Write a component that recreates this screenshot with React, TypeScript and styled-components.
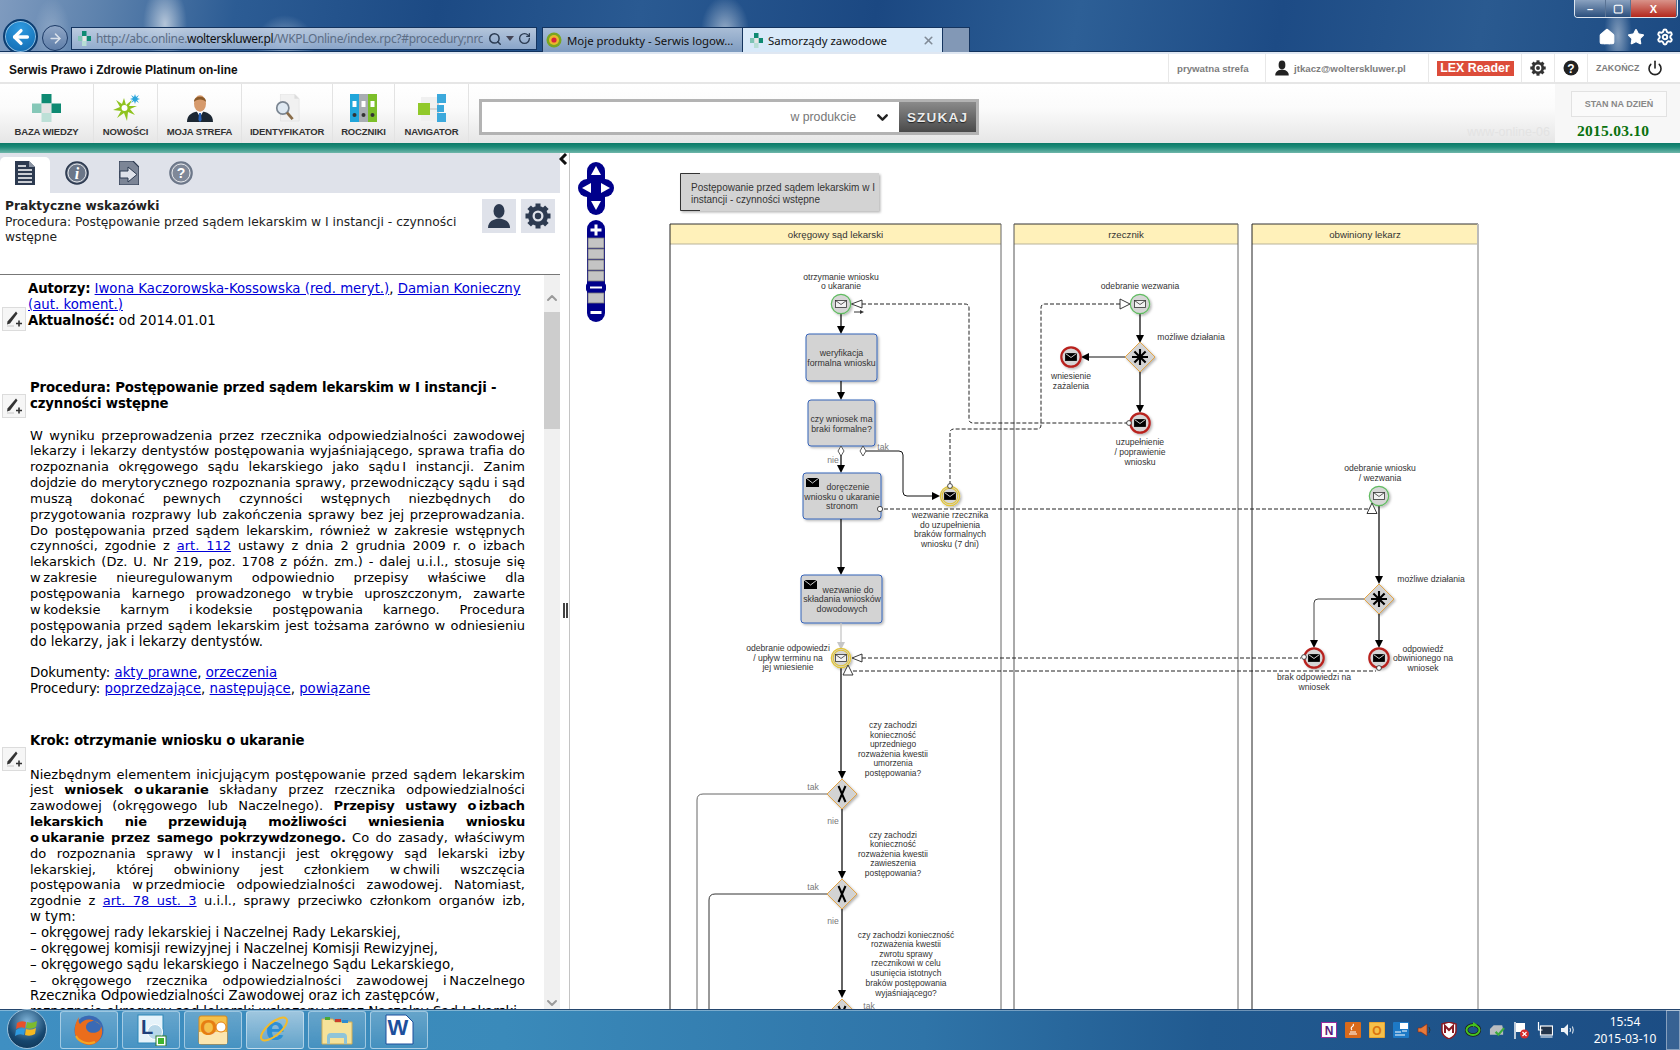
import React from "react";
import styled, { createGlobalStyle } from "styled-components";
import { ArrowLeft, ArrowRight, Search, RotateCw, Home, Star, Settings, Power, ChevronDown, ChevronUp, X as XIcon } from "lucide-react";

const Global = createGlobalStyle`
  html, body { margin: 0; padding: 0; background: #fff; }
  * { box-sizing: border-box; }
`;

const Page = styled.div`
  width: 1680px; height: 1050px; display: flex; flex-direction: column; overflow: hidden;
  font-family: "Liberation Sans", Arial, sans-serif; position: relative;
`;

/* ------- browser chrome ------- */
const Chrome = styled.div`
  height: 54px; position: relative; display: flex; align-items: flex-start; padding: 27px 0 0 3px; overflow: hidden;
  border-bottom: 2px solid #dfe7f2; box-shadow: inset 0 -1px 0 #10325e;
  background:
    radial-gradient(ellipse 18px 34px at 52px 32px, rgba(255,255,255,.22), transparent),
    radial-gradient(ellipse 22px 40px at 165px 24px, rgba(255,255,255,.6), transparent),
    radial-gradient(ellipse 30px 30px at 285px 45px, rgba(255,255,255,.45), transparent),
    radial-gradient(ellipse 24px 34px at 725px 30px, rgba(255,255,255,.5), transparent),
    radial-gradient(ellipse 14px 40px at 1618px 36px, rgba(255,255,255,.45), transparent),
    linear-gradient(100deg, #7f9bbf 0, #5d82ad 6%, #2c5c94 14%, #1c4a84 26%, #2a5a92 38%, #1b4882 52%, #2d5f96 64%, #1d4b85 76%, #2a5a90 88%, #1c4a82 100%);
`;
const BackBtn = styled.div`
  width: 35px; height: 35px; margin-top: -8px; border-radius: 50%; background: radial-gradient(circle at 50% 25%, #2f9ae0, #0d66ad);
  border: 2px solid #0d3d70; box-shadow: 0 0 0 1px rgba(255,255,255,.5) inset; display: flex; align-items: center; justify-content: center; color: #fff; flex: none;
`;
const ForwardBtn = styled.div`
  width: 26px; height: 26px; margin: -2px 0 0 4px; border-radius: 50%; background: linear-gradient(#8fa6c6, #5f7ea8);
  border: 1px solid #1c3a66; display: flex; align-items: center; justify-content: center; color: #d8e0ea; flex: none;
`;
const AddressBar = styled.div`
  width: 466px; height: 23px; margin-left: 3px; display: flex; align-items: center; padding: 0 6px; gap: 5px; flex: none;
  background: linear-gradient(rgba(196,210,228,.9), rgba(156,180,212,.85)); border: 1px solid #14345f;
  svg { flex: none; }
`;
const Url = styled.div`
  width: 387px; overflow: hidden; white-space: nowrap; font: 12px "Noto Sans", sans-serif; letter-spacing: -.33px; color: #5c6d85; flex: none;
  b { font-weight: 400; color: #111; }
`;
const UrlTools = styled.div`
  display: flex; align-items: center; gap: 4px; color: #2b3b52;
`;
const Caret = styled.span`
  width: 0; height: 0; border: 4px solid transparent; border-top: 5px solid #445; margin-top: 4px;
`;
const TabBar = styled.div`
  display: flex; height: 25px; margin-left: 5px; border: 1px solid #14345f; border-bottom: 0; flex: none;
`;
const BrowserTab = styled.div<{ $active?: boolean }>`
  width: 200px; display: flex; align-items: center; gap: 5px; padding: 0 7px 0 ${p => (p.$active ? 7 : 3)}px;
  font: 11.4px "Noto Sans", sans-serif; color: #111; white-space: nowrap;
  background: ${p => (p.$active ? "#d8e9f9" : "linear-gradient(#a9bdd6,#7f9cc0)")};
  border-right: 1px solid #14345f;
  svg { flex: none; }
`;
const TabClose = styled.span`
  margin-left: auto; color: #808a96; display: flex;
`;
const NewTab = styled.div`
  width: 26px; background: #8298b6;
`;
const RightTools = styled.div`
  margin-left: auto; display: flex; gap: 11px; padding: 1px 6px 0 0; color: #fff; align-items: center;
`;
const WindowButtons = styled.div`
  position: absolute; right: 2px; top: 0; width: 104px; height: 18px; display: flex;
  border: 1px solid #dde6f0; border-top: 0; border-radius: 0 0 4px 4px; overflow: hidden;
`;
const WinBtn = styled.div<{ $w: number; $close?: boolean }>`
  width: ${p => p.$w}px; display: flex; align-items: center; justify-content: center; color: #fff;
  background: ${p => (p.$close ? "linear-gradient(#d9938a,#b4281c)" : "linear-gradient(#8aa2c0,#2b4f7d)")};
  border-right: 1px solid #5a7394;
  font: bold 11px "Liberation Sans", sans-serif;
`;

/* ------- header ------- */
const Header = styled.div`
  height: 30px; display: flex; align-items: stretch; background: #fff; border-bottom: 2px solid #e6e6e6;
`;
const Brand = styled.div`
  font: bold 11.9px "Liberation Sans", sans-serif; color: #111; padding: 9px 0 0 9px; margin-right: auto;
`;
const HeadItem = styled.div<{ $w: number; $start?: boolean }>`
  width: ${p => p.$w}px; border-left: 1px solid #e8e8e8; display: flex; align-items: center; gap: 4px;
  justify-content: ${p => (p.$start ? "flex-start" : "center")}; padding-left: ${p => (p.$start ? 8 : 0)}px;
  font: bold 9.7px "Liberation Sans", sans-serif; color: #7d7d7d; white-space: nowrap; flex: none;
`;
const FinishLabel = styled.span`
  font-size: 8.9px; margin-right: 4px;
`;
const LexBadge = styled.span`
  background: #dc4c3a; color: #fff; font: bold 12.4px "Liberation Sans", sans-serif; width: 77px; height: 15px; line-height: 15px; text-align: center;
`;

/* ------- toolbar ------- */
const Toolbar = styled.div`
  height: 59px; display: flex; background: linear-gradient(#fff 0, #fbfbfb 40%, #e6e6e6 100%);
`;
const ToolItem = styled.div<{ $w: number }>`
  width: ${p => p.$w}px; border-right: 1px solid #e3e3e3; display: flex; flex-direction: column; align-items: center; padding-top: 10px; flex: none;
  svg { height: 28px; display: block; }
`;
const ToolLabel = styled.div`
  margin-top: 4px; font: bold 9.5px "Liberation Sans", sans-serif; color: #333; white-space: nowrap; letter-spacing: -.15px;
`;
const SearchForm = styled.div`
  width: 500px; height: 36px; margin: 15px 0 0 10px; display: flex; border: 3px solid #b3b3b3; background: #fff; flex: none;
`;
const SearchInput = styled.div`
  flex: 1; display: flex; align-items: center; justify-content: flex-end; gap: 18px; padding-right: 8px;
  font: 12.3px "Liberation Sans", sans-serif; color: #777;
`;
const SearchChevron = styled.span`
  color: #222; display: flex;
`;
const SearchBtn = styled.div`
  width: 77px; background: linear-gradient(#8a8a8a, #4a4a4a); color: #ececec; display: flex; align-items: center; justify-content: center;
  font: bold 13.5px "Liberation Sans", sans-serif; letter-spacing: 1.2px; text-shadow: 0 1px 1px #222;
`;
const Watermark = styled.div`
  margin: 41px 5px 0 auto; color: #e3e3e3; font: 12.5px "Liberation Sans", sans-serif; white-space: nowrap;
`;
const DatePanel = styled.div`
  width: 125px; background: #f7f7f7; padding: 7px 0 0 16px; flex: none;
`;
const DateBtn = styled.div`
  width: 96px; height: 26px; border: 1px solid #e2e2e2; background: #fafafa; display: flex; align-items: center; justify-content: center;
  font: bold 9px "Liberation Sans", sans-serif; color: #888;
`;
const DateValue = styled.div`
  margin: 5px 0 0 6px; font: bold 15.5px "Liberation Serif", serif; color: #0a720f; letter-spacing: .25px;
`;
const TealBar = styled.div`
  height: 10px; background: linear-gradient(#0d7a68, #1d8b78 40%, #6fb6aa);
`;

/* ------- main ------- */
const Main = styled.div`
  height: 856px; display: flex;
`;
const LeftPanel = styled.div`
  width: 570px; flex: none; display: flex; flex-direction: column; position: relative; border-right: 1px solid #c4c4c4;
`;
const TabStrip = styled.div`
  width: 560px; height: 40px; background: #dfe2ea; display: flex; align-items: flex-end; flex: none;
`;
const PanelTab = styled.div<{ $active?: boolean }>`
  width: ${p => (p.$active ? 50 : 52)}px; height: 36px; display: flex; justify-content: center; align-items: flex-start; padding-top: 4px;
  margin-left: ${p => (p.$active ? 0 : 1)}px; margin-right: ${p => (p.$active ? 0 : -1)}px;
  background: ${p => (p.$active ? "#fff" : "transparent")}; border-radius: 5px 5px 0 0;
`;
const CollapseBtn = styled.div`
  position: absolute; top: 0; left: 559px; color: #111; display: flex;
`;
const SplitHandle = styled.div`
  position: absolute; top: 450px; left: 563px; width: 5px; height: 15px; border-left: 2px solid #444; border-right: 2px solid #444;
`;
const InfoBox = styled.div`
  width: 560px; height: 82px; border-bottom: 1px solid #777; padding: 5px 5px 0 5px; display: flex; flex: none;
`;
const InfoText = styled.div`
  width: 460px; font: 12.3px/15px "DejaVu Sans", Verdana, sans-serif; color: #222;
  strong { display: block; font-size: 12.2px; line-height: 16.5px; }
`;
const InfoBtns = styled.div`
  margin: 1px 0 0 17px; display: flex; gap: 5px;
`;
const InfoBtn = styled.div`
  width: 34px; height: 34px; background: #dfe2ea; display: flex; align-items: center; justify-content: center; color: #2d3a50;
`;
const Body = styled.div`
  flex: 1; display: flex; min-height: 0; width: 560px;
`;
const Article = styled.div`
  width: 544px; height: 100%; overflow: hidden; position: relative; padding: 6px 19px 0 0;
  font: 13.3px/15.85px "DejaVu Sans", Verdana, sans-serif; color: #000;
  a { color: #0000d8; text-decoration: underline; }
  b { letter-spacing: -.15px; }
`;
const Meta = styled.div`
  padding-left: 28px;
`;
const Section = styled.div<{ $mt: number }>`
  margin-top: ${p => p.$mt}px; padding-left: 30px;
`;
const Heading = styled.div`
  font-weight: 700; line-height: 16.5px; letter-spacing: -.15px;
`;
const Line = styled.div<{ $last?: boolean }>`
  font-size: ${p => (p.$last ? 13.3 : 13)}px;
  text-align: justify; text-align-last: ${p => (p.$last ? "left" : "justify")};
`;
const PenBtn = styled.div<{ $top: number }>`
  position: absolute; left: 2px; top: ${p => p.$top}px; width: 24px; height: 24px; background: #f6f6f6; border: 1px solid #dcdcdc;
  display: flex; align-items: center; justify-content: center;
`;
const Scroll = styled.div`
  width: 16px; background: #f0f0f0; display: flex; flex-direction: column; align-items: center; color: #9a9a9a;
`;
const ScrollCap = styled.div<{ $mt: number }>`
  height: 16px; margin-top: ${p => p.$mt}px; display: flex; align-items: center;
`;
const Thumb = styled.div`
  width: 16px; height: 117px; margin-top: 6px; background: #cdcdcd; flex: none;
`;
const Canvas = styled.div`
  width: 1110px; height: 856px; overflow: hidden; flex: none;
`;

/* ------- taskbar ------- */
const Taskbar = styled.div`
  height: 41px; display: flex; align-items: center; position: relative; border-top: 1px solid #24466e;
  background: linear-gradient(90deg, #3f8fc2 0, #3a8aba 30%, #2f74a8 55%, #215a90 72%, #1c4d84 100%);
  box-shadow: inset 0 1px 0 rgba(255,255,255,.35);
`;
const Orb = styled.div`
  width: 40px; height: 40px; margin: -2px 13px 0 7px; flex: none; border-radius: 50%;
  background: radial-gradient(circle at 50% 30%, #7fb3d8, #16476f 60%, #0c2e4d); border: 1px solid #9cc0da; display: flex; align-items: center; justify-content: center;
`;
const TaskBtn = styled.div<{ $active?: boolean }>`
  width: 58px; height: 38px; margin-right: 4px; flex: none; display: flex; align-items: center; justify-content: center; border-radius: 3px;
  border: 1px solid rgba(225,240,250,.55);
  background: ${p => (p.$active ? "linear-gradient(rgba(255,255,255,.5),rgba(255,255,255,.2))" : "linear-gradient(rgba(255,255,255,.22),rgba(255,255,255,.05))")};
`;
const Tray = styled.div`
  margin-left: auto; display: flex; align-items: center; gap: 8px;
`;
const Clock = styled.div`
  width: 80px; margin-right: -7px; text-align: center; color: #fff; font: 12px/17px "Noto Sans", sans-serif;
`;
const ShowDesktop = styled.div`
  width: 14px; height: 40px; border: 1px solid rgba(255,255,255,.4); background: rgba(255,255,255,.12);
`;

/* ------- diagram text ------- */
const Lbl = styled.text<{ $gray?: boolean; $size?: number; $start?: boolean }>`
  font-family: "Liberation Sans", Arial, sans-serif; font-size: ${p => p.$size ?? 8.6}px;
  fill: ${p => (p.$gray ? "#777" : "#333")}; text-anchor: ${p => (p.$start ? "start" : "middle")}; dominant-baseline: central;
`;

const Head = ({ x, y, dir, color = "#000" }: { x: number; y: number; dir: "d" | "r" | "l"; color?: string }) => {
  const pts = dir === "d" ? `${x - 4},${y - 8} ${x + 4},${y - 8} ${x},${y}` : dir === "r" ? `${x - 8},${y - 4} ${x - 8},${y + 4} ${x},${y}` : `${x + 8},${y - 4} ${x + 8},${y + 4} ${x},${y}`;
  return <polygon points={pts} fill={color} />;
};

const MsgHead = ({ pts }: { pts: string }) => <polygon points={pts} fill="#fff" stroke="#222" strokeWidth=".9" />;

const Envelope = ({ x, y, filled }: { x: number; y: number; filled?: boolean }) => (
  <g>
    <rect x={x - 5.5} y={y - 3.5} width="11" height="7" fill={filled ? "#000" : "#f2f2f2"} stroke={filled ? "#000" : "#333"} strokeWidth=".8" />
    <path d={`M${x - 5.5} ${y - 3.5} L${x} ${y + .5} L${x + 5.5} ${y - 3.5}`} fill="none" stroke={filled ? "#fff" : "#333"} strokeWidth=".8" />
  </g>
);

const Event = ({ x, y, kind, filled }: { x: number; y: number; kind: "start" | "mid" | "end"; filled?: boolean }) => (
  <g>
    <circle cx={x} cy={y} r="9.7" fill="#d6d6d6" stroke={kind === "start" ? "#5fbb5f" : kind === "mid" ? "#e2c435" : "#b8201f"} strokeWidth={kind === "end" ? 2.2 : 1.2} filter="url(#sh)" />
    {kind === "mid" && <circle cx={x} cy={y} r="7.8" fill="none" stroke="#e2c435" strokeWidth="1.1" />}
    <Envelope x={x} y={y} filled={filled} />
  </g>
);

const Task = ({ x, y, w, h, env }: { x: number; y: number; w: number; h: number; env?: boolean }) => (
  <g>
    <rect x={x} y={y} width={w} height={h} rx="3" fill="#d3d3d3" stroke="#3562b8" strokeWidth="1" filter="url(#sh)" />
    {env && (
      <g>
        <rect x={x + 3} y={y + 5} width="13" height="9" fill="#000" />
        <path d={`M${x + 3} ${y + 5} L${x + 9.5} ${y + 10} L${x + 16} ${y + 5}`} fill="none" stroke="#fff" strokeWidth=".8" />
      </g>
    )}
  </g>
);

const Gateway = ({ x, y, kind }: { x: number; y: number; kind: "x" | "star" }) => (
  <g>
    <polygon points={`${x},${y - 15} ${x + 15},${y} ${x},${y + 15} ${x - 15},${y}`} fill="#d3d3d3" stroke="#e3a445" strokeWidth="1" filter="url(#sh)" />
    {kind === "x" ? (
      <path d={`M${x - 3.5} ${y - 8} L${x + 3.5} ${y + 8} M${x + 3.5} ${y - 8} L${x - 3.5} ${y + 8}`} stroke="#000" strokeWidth="2" />
    ) : (
      <path d={`M${x} ${y - 8} V${y + 8} M${x - 8} ${y} H${x + 8} M${x - 5.6} ${y - 5.6} L${x + 5.6} ${y + 5.6} M${x + 5.6} ${y - 5.6} L${x - 5.6} ${y + 5.6}`} stroke="#000" strokeWidth="2.1" />
    )}
  </g>
);

const Text = ({ x, lines, gray, size }: { x: number; lines: [string, number][]; gray?: boolean; size?: number }) => (
  <>
    {lines.map(([t, y]) => (
      <Lbl key={t + y} x={x} y={y} $gray={gray} $size={size}>{t}</Lbl>
    ))}
  </>
);

const Flow = ({ d, color = "#111", w = 1.3 }: { d: string; color?: string; w?: number }) => <path d={d} fill="none" stroke={color} strokeWidth={w} />;
const Dash = ({ d }: { d: string }) => <path d={d} fill="none" stroke="#222" strokeWidth="1" strokeDasharray="4 2" />;

const Lane = ({ x, w, title, leftDark, rightColor = "#666", rightW = 1 }: { x: number; w: number; title: string; leftDark?: boolean; rightColor?: string; rightW?: number }) => (
  <g>
    <rect x={x} y={224} width={w} height={20} fill="#fff1ba" />
    <line x1={x} x2={x + w} y1={244} y2={244} stroke="#b9b39a" strokeWidth="1" />
    <line x1={x} x2={x + w} y1={224} y2={224} stroke="#333" strokeWidth="1" />
    <line x1={x} x2={x} y1={224} y2={1040} stroke={leftDark ? "#222" : "#555"} strokeWidth="1" />
    <line x1={x + w} x2={x + w} y1={224} y2={1040} stroke={rightColor} strokeWidth={rightW} />
    <Lbl x={x + w / 2} y={234.5} $size={9.7}>{title}</Lbl>
  </g>
);

const Diagram = () => (
  <svg width="1110" height="856" viewBox="570 153 1110 856" xmlns="http://www.w3.org/2000/svg">
    <defs>
      <filter id="sh" x="-20%" y="-20%" width="150%" height="150%">
        <feDropShadow dx="1.5" dy="1.5" stdDeviation="1.2" floodColor="#000" floodOpacity=".28" />
      </filter>
    </defs>

    {/* pan / zoom control */}
    <g fill="#00008b">
      <rect x="587" y="162" width="18" height="53" rx="9" />
      <rect x="578" y="179" width="36" height="18" rx="9" />
      <rect x="587" y="220" width="18" height="102" rx="9" />
    </g>
    <g fill="#fff">
      <polygon points="596,166 591,175 601,175" />
      <polygon points="596,210 591,201 601,201" />
      <polygon points="582,188 591,183 591,193" />
      <polygon points="610,188 601,183 601,193" />
      <rect x="590.5" y="228.5" width="11" height="3" />
      <rect x="594.5" y="224.5" width="3" height="11" />
      <rect x="590.5" y="311" width="11" height="3" />
    </g>
    {[238, 249, 260, 271, 293].map(y => (
      <rect key={y} x="588" y={y} width="16" height="10" fill="#c4c4c4" stroke="#777" strokeWidth=".8" />
    ))}
    <rect x="586" y="283" width="20" height="9" rx="3" fill="#00008b" />
    <rect x="590" y="286.5" width="12" height="2" fill="#fff" />

    {/* title */}
    <rect x="680" y="173" width="199" height="38" fill="#d3d3d3" filter="url(#sh)" />
    <path d="M700 173.5 H680.5 V210.5 H700" fill="none" stroke="#333" strokeWidth="1" />
    <Lbl x={691} y={187} $start $size={10}>Postępowanie przed sądem lekarskim w I</Lbl>
    <Lbl x={691} y={199} $start $size={10}>instancji - czynności wstępne</Lbl>

    <Lane x={670} w={331} title="okręgowy sąd lekarski" leftDark />
    <Lane x={1014} w={224} title="rzecznik" />
    <Lane x={1252} w={226} title="obwiniony lekarz" leftDark rightColor="#bbb" rightW={2} />

    {/* message flows */}
    <Dash d="M862 304 H965 Q969 304 969 308 V419 Q969 423 973 423 H1127" />
    <Dash d="M1120 304 H1045 Q1041 304 1041 308 V425 Q1041 429 1037 429 H954 Q950 429 950 433 V486" />
    <Dash d="M884 509 H1368" />
    <Dash d="M862 658 H1301" />
    <Dash d="M853 671 H1376" />

    {/* lane 1 */}
    <Text x={841} lines={[["otrzymanie wniosku", 277], ["o ukaranie", 286]]} />
    <Flow d="M841 314 V330" /><Head x={841} y={334} dir="d" />
    <Event x={841} y={304} kind="start" />
    <MsgHead pts="851.5,304 862,300 862,308" />
    <path d="M854 312 H862" stroke="#333" strokeWidth="1" /><polygon points="860,310 864,312 860,314" fill="#333" />

    <Task x={806} y={334} w={71} h={47} />
    <Text x={841.5} size={8.8} lines={[["weryfikacja", 353], ["formalna wniosku", 363]]} />
    <Flow d="M841 381 V396" /><Head x={841} y={400} dir="d" />

    <Task x={808} y={400} w={67} h={46} />
    <Text x={841.5} size={8.8} lines={[["czy wniosek ma", 419], ["braki formalne?", 429]]} />

    <Flow d="M841 455 V469" /><Head x={841} y={473} dir="d" />
    <polygon points="841,446 844,451 841,456 838,451" fill="#fff" stroke="#333" strokeWidth=".8" />
    <Flow d="M866 451 H899 Q903 451 903 455 V492 Q903 496 907 496 H935" w={1} />
    <Head x={940} y={496} dir="r" />
    <polygon points="863,446 866,451 863,456 860,451" fill="#fff" stroke="#333" strokeWidth=".8" />
    <Text x={883} gray lines={[["tak", 447]]} />
    <Text x={833} gray lines={[["nie", 460]]} />

    <Task x={803} y={473} w={78} h={46} env />
    <Text x={848} size={8.8} lines={[["doręczenie", 487]]} />
    <Text x={842} size={8.8} lines={[["wniosku o ukaranie", 497], ["stronom", 506]]} />
    <circle cx="880" cy="509" r="2.6" fill="#fff" stroke="#222" strokeWidth=".8" />

    <Event x={950} y={496} kind="mid" filled />
    <circle cx="950" cy="486" r="2.4" fill="#fff" stroke="#222" strokeWidth=".8" />
    <Text x={950} lines={[["wezwanie rzecznika", 515], ["do uzupełnienia", 525], ["braków formalnych", 534], ["wniosku (7 dni)", 544]]} />

    <Flow d="M841 519 V570" /><Head x={841} y={575} dir="d" />
    <Task x={801} y={575} w={81} h={48} env />
    <Text x={848} size={8.8} lines={[["wezwanie do", 590]]} />
    <Text x={842} size={8.8} lines={[["składania wniosków", 599], ["dowodowych", 609]]} />

    <Flow d="M841 623 V645" color="#c6c6c6" /><Head x={841} y={650} dir="d" color="#c6c6c6" />
    <Flow d="M841 668 V775" /><Head x={842} y={779} dir="d" />
    <Event x={841} y={658} kind="mid" />
    <MsgHead pts="852,658 862,654 862,662" />
    <MsgHead pts="848,665 843,675 853,675" />
    <Text x={788} lines={[["odebranie odpowiedzi", 648], ["/ upływ terminu na", 658], ["jej wniesienie", 667]]} />

    <Text x={893} size={8.4} lines={[["czy zachodzi", 725], ["konieczność", 735], ["uprzedniego", 744], ["rozważenia kwestii", 754], ["umorzenia", 763], ["postępowania?", 773]]} />
    <Flow d="M827 794 H703 Q697 794 697 800 V1010" color="#666" w={1} />
    <Gateway x={842} y={794} kind="x" />
    <Text x={813} gray lines={[["tak", 787]]} />
    <Text x={833} gray lines={[["nie", 821]]} />
    <Flow d="M842 809 V875" /><Head x={842} y={879} dir="d" />

    <Text x={893} size={8.4} lines={[["czy zachodzi", 835], ["konieczność", 844], ["rozważenia kwestii", 854], ["zawieszenia", 863], ["postępowania?", 873]]} />
    <Flow d="M827 894 H715 Q709 894 709 900 V1010" color="#333" w={1} />
    <Gateway x={842} y={894} kind="x" />
    <Text x={813} gray lines={[["tak", 887]]} />
    <Text x={833} gray lines={[["nie", 921]]} />
    <Flow d="M842 909 V994" /><Head x={842} y={998} dir="d" />

    <Text x={906} size={8.4} lines={[["czy zachodzi konieczność", 935], ["rozważenia kwestii", 944], ["zwrotu sprawy", 954], ["rzecznikowi w celu", 963], ["usunięcia istotnych", 973], ["braków postępowania", 983], ["wyjaśniającego?", 993]]} />
    <Gateway x={842} y={1014} kind="x" />
    <Text x={869} gray lines={[["tak", 1006]]} />

    {/* lane 2 */}
    <Text x={1140} lines={[["odebranie wezwania", 286]]} />
    <Flow d="M1140 314 V339" /><Head x={1140} y={343} dir="d" />
    <Event x={1140} y={304} kind="start" />
    <MsgHead pts="1130,304 1120,299 1120,309" />
    <Flow d="M1125 357 H1084" w={1} /><Head x={1081} y={357} dir="l" />
    <Flow d="M1140 372 V409" /><Head x={1140} y={413} dir="d" />
    <Gateway x={1140} y={357} kind="star" />
    <Text x={1191} lines={[["możliwe działania", 337]]} />
    <Event x={1071} y={357} kind="end" filled />
    <Text x={1071} lines={[["wniesienie", 376], ["zażalenia", 386]]} />
    <Event x={1140} y={423} kind="end" filled />
    <circle cx="1129" cy="423" r="2.4" fill="#fff" stroke="#222" strokeWidth=".8" />
    <Text x={1140} lines={[["uzupełnienie", 442], ["/ poprawienie", 452], ["wniosku", 462]]} />

    {/* lane 3 */}
    <Text x={1380} lines={[["odebranie wniosku", 468], ["/ wezwania", 478]]} />
    <Flow d="M1379 506 V580" /><Head x={1379} y={584} dir="d" />
    <Event x={1379} y={496} kind="start" />
    <MsgHead pts="1372,503 1367,513.5 1377,513.5" />
    <Flow d="M1365 599 H1318 Q1314 599 1314 603 V644" color="#444" w={1} /><Head x={1314} y={648} dir="d" />
    <Flow d="M1379 614 V644" /><Head x={1379} y={648} dir="d" />
    <Gateway x={1379} y={599} kind="star" />
    <Text x={1431} lines={[["możliwe działania", 579]]} />
    <Event x={1314} y={658} kind="end" filled />
    <circle cx="1304" cy="657" r="2.4" fill="#fff" stroke="#222" strokeWidth=".8" />
    <Text x={1314} lines={[["brak odpowiedzi na", 677], ["wniosek", 687]]} />
    <Event x={1379} y={658} kind="end" filled />
    <circle cx="1379" cy="668" r="2.4" fill="#fff" stroke="#222" strokeWidth=".8" />
    <Text x={1423} lines={[["odpowiedź", 649], ["obwinionego na", 658], ["wniosek", 668]]} />
  </svg>
);

/* ------- small icons ------- */
const Favicon = () => (
  <svg width="13" height="15" viewBox="0 0 13 15">
    <rect x="4" y="0" width="4.5" height="5" fill="#0e8a72" /><rect x="0" y="5" width="4.5" height="5" fill="#7fc4b4" />
    <rect x="8.5" y="5" width="4.5" height="5" fill="#0e8a72" /><rect x="4.5" y="5" width="4" height="5" fill="#e5e5e5" /><rect x="4" y="10" width="4.5" height="5" fill="#b7ded5" />
  </svg>
);
const TabFavGlobe = () => (
  <svg width="16" height="16" viewBox="0 0 16 16">
    <circle cx="8" cy="8" r="7.5" fill="#7aa51f" /><circle cx="8" cy="8" r="5" fill="#e8b82a" /><circle cx="8" cy="8" r="2.6" fill="#d8233c" />
  </svg>
);

const CrossLogo = () => (
  <svg width="29" height="28" viewBox="0 0 29 28">
    <rect x="9.5" y="0" width="10" height="9.5" fill="#0e8a72" /><rect x="9.5" y="9.5" width="10" height="9.5" fill="#e4e4e4" />
    <rect x="0" y="9.5" width="9.5" height="9.5" fill="#86c8b8" /><rect x="19.5" y="9.5" width="9.5" height="9.5" fill="#0e8a72" />
    <rect x="9.5" y="19" width="10" height="9" fill="#bde0d7" />
  </svg>
);
const Burst = () => (
  <svg width="28" height="28" viewBox="0 0 28 28">
    <polygon points="12,4 14,11 20,6 17,12 25,12 18,15 23,21 16,18 15,27 12,19 5,24 9,17 1,16 8,13 4,6 10,10" fill="#8fc31f" />
    <circle cx="12.5" cy="14" r="3" fill="#fff" />
    <polygon points="23,0 24,3 27,1 25,4 28,5 25,6 27,9 24,7 23,10 22,7 19,9 21,6 18,5 21,4 19,1 22,3" fill="#2aa5dc" />
  </svg>
);
const ManIcon = () => (
  <svg width="28" height="28" viewBox="0 0 28 28">
    <path d="M1 28 C1 20 7 18 14 17 C21 18 27 20 27 28Z" fill="#1c2733" />
    <path d="M10.5 17 L14 23 L17.5 17Z" fill="#fff" /><path d="M13 19 H15 L15.6 26 L14 28 L12.4 26Z" fill="#2a62b8" />
    <ellipse cx="14" cy="9.5" rx="6" ry="8.2" fill="#d69a6c" />
    <path d="M8 8 C7.5 1 20.5 1 20 8 C18 4.5 10 4.5 8 8Z" fill="#8a5a2a" />
  </svg>
);
const IdentIcon = () => (
  <svg width="28" height="28" viewBox="0 0 28 30">
    <path d="M7 0 H22 L27 5 V29 H7Z" fill="#f1f1f1" stroke="#dcdcdc" strokeWidth=".6" /><path d="M22 0 V5 H27" fill="#dcdcdc" />
    <circle cx="9.5" cy="15" r="6.5" fill="#dfe9f2" stroke="#7a8591" strokeWidth="1.8" />
    <path d="M14 20 L20 27" stroke="#8a6d4a" strokeWidth="3" />
  </svg>
);
const BindersIcon = () => (
  <svg width="27" height="28" viewBox="0 0 27 28">
    <rect x="0" y="0" width="9" height="28" fill="#21a6da" /><rect x="9" y="0" width="9" height="28" fill="#a8adb2" /><rect x="18" y="0" width="9" height="28" fill="#7cbf2a" />
    {[0, 9, 18].map(x => (
      <g key={x}><rect x={x + 2.5} y="7" width="4" height="6" fill="#fff" /><circle cx={x + 4.5} cy="21" r="2" fill="#333" /></g>
    ))}
  </svg>
);
const NavIcon = () => (
  <svg width="28" height="28" viewBox="0 0 28 28">
    <rect x="3" y="3" width="18" height="24" fill="#f0f0f0" />
    <path d="M12 15 H20 M20 5 V24" stroke="#bbb" strokeWidth="1.2" fill="none" />
    <rect x="0" y="9" width="12" height="12" fill="#91c92a" />
    <rect x="19" y="0" width="9" height="9" fill="#3ca9dc" /><rect x="19" y="11" width="7" height="7" fill="#3ca9dc" /><rect x="19" y="19" width="9" height="9" fill="#3ca9dc" />
  </svg>
);

const DocIcon = () => (
  <svg width="20" height="24" viewBox="0 0 20 24">
    <path d="M0 0 H14 L20 6 V24 H0Z" fill="#2d3a50" />
    <path d="M3 5 H11 M3 9 H17 M3 13 H17 M3 17 H17 M3 21 H17" stroke="#fff" strokeWidth="1.4" />
    <path d="M14 0 V6 H20" fill="#8a93a3" />
  </svg>
);
const InfoIcon = () => (
  <svg width="24" height="24" viewBox="0 0 24 24">
    <circle cx="12" cy="12" r="11" fill="#6b7688" stroke="#2d3a50" strokeWidth="1.6" />
    <circle cx="12" cy="12" r="9" fill="none" stroke="#fff" strokeWidth=".8" />
    <text x="12" y="18" textAnchor="middle" fill="#fff" fontFamily="Liberation Serif" fontStyle="italic" fontWeight="700" fontSize="16">i</text>
  </svg>
);
const DocArrowIcon = () => (
  <svg width="20" height="24" viewBox="0 0 20 24">
    <path d="M0 0 H14 L20 6 V24 H0Z" fill="#7c8596" stroke="#2d3a50" strokeWidth="1.2" />
    <path d="M1 10 H9 V6 L18 13.5 L9 21 V17 H1Z" fill="#dfe2ea" stroke="#2d3a50" strokeWidth="1" />
  </svg>
);
const HelpIcon = () => (
  <svg width="24" height="24" viewBox="0 0 24 24">
    <circle cx="12" cy="12" r="11" fill="#7f8898" stroke="#6b7688" strokeWidth="1.6" />
    <circle cx="12" cy="12" r="9" fill="none" stroke="#fff" strokeWidth=".8" />
    <text x="12" y="17" textAnchor="middle" fill="#fff" fontFamily="Liberation Sans" fontWeight="700" fontSize="14">?</text>
  </svg>
);
const PersonIcon = ({ size = 26, color = "#2d3a50" }: { size?: number; color?: string }) => (
  <svg width={size} height={size} viewBox="0 0 26 26">
    <ellipse cx="13" cy="8" rx="5.5" ry="7" fill={color} />
    <path d="M2 25 C2 18 8 16 13 15.5 C18 16 24 18 24 25Z" fill={color} />
  </svg>
);
const GearIcon = ({ size = 26, color = "#2d3a50", hole = "#dfe2ea" }: { size?: number; color?: string; hole?: string }) => (
  <svg width={size} height={size} viewBox="0 0 26 26">
    <g fill={color}>
      {[0, 45, 90, 135, 180, 225, 270, 315].map(a => (
        <rect key={a} x="10.5" y="0.5" width="5" height="6" transform={`rotate(${a} 13 13)`} />
      ))}
      <circle cx="13" cy="13" r="10" />
    </g>
    <circle cx="13" cy="13" r="5.5" fill={hole} /><circle cx="13" cy="13" r="3.2" fill={color} />
  </svg>
);
const PenPlus = () => (
  <svg width="18" height="18" viewBox="0 0 18 18">
    <path d="M11 1.5 L2.5 11.5 L2 14.5 L5 13.5 L12.5 3.5Z" fill="#333" />
    <path d="M2 16 H9" stroke="#aaa" strokeWidth=".6" />
    <path d="M14 10.5 V16.5 M11 13.5 H17" stroke="#333" strokeWidth="1.6" />
  </svg>
);

/* taskbar icons */
const WinFlag = () => (
  <svg width="24" height="22" viewBox="0 0 24 22">
    <path d="M2 5 Q6 2 11 4 L10 10 Q5 8 1 11Z" fill="#e8502a" /><path d="M12 4 Q17 6 22 3 L21 9 Q16 12 11 10Z" fill="#7cbb2e" />
    <path d="M1 12 Q5 9 10 11 L9 17 Q4 15 0 18Z" fill="#2f9be0" /><path d="M11 11 Q16 13 21 10 L20 16 Q15 19 10 17Z" fill="#f6b821" />
  </svg>
);
const Firefox = () => (
  <svg width="32" height="32" viewBox="0 0 32 32">
    <circle cx="16" cy="16" r="14.5" fill="#3a6ab5" />
    <path d="M6 3 C5 7 6 9 7 10 C10 6 16 4 21 7 C17 7 13 9 13 13 C13 18 20 21 26 17 C27 16 28 14 28 12 C31 19 28 27 21 30 C13 33 4 28 2 20 C1 13 3 7 6 3Z" fill="#ea6d1c" />
    <path d="M21 7 C25 8 28 11 28 12 C27 10 24 8 21 7Z" fill="#f6a521" />
    <path d="M3 22 C6 28 15 31 22 28" stroke="#f6a521" strokeWidth="2" fill="none" />
  </svg>
);
const Lync = () => (
  <svg width="32" height="32" viewBox="0 0 32 32">
    <rect x="3" y="1" width="25" height="28" fill="#e6f3fa" stroke="#2d87b8" /><circle cx="20" cy="18" r="7.5" fill="#b9d8e9" stroke="#fff" />
    <text x="6" y="20" fontFamily="Liberation Sans" fontWeight="700" fontSize="20" fill="#1f3f7a">L</text>
    <rect x="21" y="22" width="10" height="10" fill="#fff" stroke="#2c7a2c" /><rect x="23" y="24" width="6" height="6" fill="#3fb52f" />
  </svg>
);
const Outlook = () => (
  <svg width="30" height="32" viewBox="0 0 30 32">
    <rect x="1" y="2" width="28" height="28" rx="2" fill="#f5c04a" stroke="#d98a1c" /><rect x="1" y="18" width="28" height="12" fill="#fbe6b0" />
    <text x="2" y="21" fontFamily="Liberation Sans" fontWeight="700" fontSize="22" fill="#e67e12">O</text>
    <circle cx="23" cy="13" r="5" fill="#fff" stroke="#e67e12" />
  </svg>
);
const IE = () => (
  <svg width="32" height="32" viewBox="0 0 32 32">
    <text x="16" y="26" textAnchor="middle" fontFamily="Liberation Sans" fontWeight="700" fontSize="34" fill="#2d8fd6">e</text>
    <ellipse cx="15" cy="15" rx="16" ry="6.5" transform="rotate(-40 15 15)" fill="none" stroke="#f2bb2c" strokeWidth="2" />
  </svg>
);
const Folder = () => (
  <svg width="32" height="30" viewBox="0 0 32 30">
    <path d="M1 4 H12 L14 7 H31 V29 H1Z" fill="#f5e29a" stroke="#cfae58" /><rect x="4" y="2" width="5" height="3" fill="#49a835" /><rect x="14" y="4" width="6" height="3" fill="#cc3a2a" /><rect x="21" y="5" width="6" height="3" fill="#2e8cd0" />
    <path d="M6 22 Q6 18 10 18 H22 Q26 18 26 22 L26 29 H23 V23 H9 V29 H6Z" fill="#8fc4d8" />
  </svg>
);
const Word = () => (
  <svg width="30" height="32" viewBox="0 0 30 32">
    <path d="M2 1 H22 L29 8 V30 H2Z" fill="#fff" stroke="#1d4f9c" />
    <text x="14" y="21" textAnchor="middle" fontFamily="Liberation Sans" fontWeight="700" fontSize="22" fill="#1d4f9c">W</text>
  </svg>
);

const TrayOneNote = () => (<svg width="16" height="16" viewBox="0 0 16 16"><rect width="16" height="16" rx="1" fill="#fff" stroke="#9b2c9c" strokeWidth="2" /><text x="8" y="13" textAnchor="middle" fontFamily="Liberation Sans" fontWeight="700" fontSize="12" fill="#5a1a7a">N</text></svg>);
const TrayJava = () => (<svg width="16" height="16" viewBox="0 0 16 16"><rect width="16" height="16" rx="1" fill="#d96a1c" /><path d="M4 12 H12 M5 10 H11 M7 8 Q5 6 8 4 Q9 3 8 2" stroke="#fff" strokeWidth="1.2" fill="none" /></svg>);
const TrayOutlook = () => (<svg width="16" height="16" viewBox="0 0 16 16"><rect width="16" height="16" rx="1" fill="#f5c04a" stroke="#d98a1c" /><text x="8" y="13" textAnchor="middle" fontFamily="Liberation Sans" fontWeight="700" fontSize="12" fill="#d9740f">O</text></svg>);
const TrayBlue = () => (<svg width="16" height="16" viewBox="0 0 16 16"><rect width="16" height="16" rx="1" fill="#1d79c6" /><rect x="7" y="1" width="8" height="6" fill="#fff" /><path d="M2 10 H8 M2 13 H12 M9 9 H14" stroke="#fff" strokeWidth="1.2" /></svg>);
const TraySpeaker = () => (<svg width="16" height="16" viewBox="0 0 16 16"><path d="M1 6 H4 L10 2 V14 L4 10 H1Z" fill="#e87a3a" stroke="#8a2a10" strokeWidth=".6" /><path d="M12 5 Q14 8 12 11" stroke="#333" fill="none" /></svg>);
const TrayShield = () => (<svg width="16" height="17" viewBox="0 0 16 17"><path d="M1 2 L8 0 L15 2 V9 Q15 14 8 17 Q1 14 1 9Z" fill="#fff" stroke="#8a1a22" strokeWidth="1.5" /><path d="M4 11 V4 L8 8 L12 4 V11" stroke="#8a1a22" strokeWidth="2" fill="none" /></svg>);
const TrayRing = () => (<svg width="16" height="16" viewBox="0 0 16 16"><ellipse cx="8" cy="8" rx="6.5" ry="5" fill="none" stroke="#1d1d1d" strokeWidth="3.4" /><ellipse cx="8" cy="8" rx="6.5" ry="5" fill="none" stroke="#46c41f" strokeWidth="2" /><path d="M8 0 V5 L12 2.5Z" fill="#46c41f" /></svg>);
const TrayPrint = () => (<svg width="16" height="16" viewBox="0 0 17 16"><path d="M1 7 L5 3 H14 L15 7 V13 H1Z" fill="#b9bcc0" /><path d="M7 10 L10 13 L16 6" stroke="#3cab3c" strokeWidth="2.4" fill="none" /></svg>);
const TrayFlag = () => (<svg width="16" height="17" viewBox="0 0 16 17"><path d="M2 0 V17" stroke="#fff" strokeWidth="1.4" /><path d="M3 1 H12 V10 H3Z" fill="#fff" /><circle cx="11.5" cy="12" r="4.5" fill="#d62b2b" /><path d="M9.5 10 L13.5 14 M13.5 10 L9.5 14" stroke="#fff" strokeWidth="1.2" /></svg>);
const TrayNet = () => (<svg width="16" height="16" viewBox="0 0 15 16"><rect x="3" y="4" width="12" height="9" fill="#23344a" stroke="#fff" strokeWidth="1.2" /><path d="M3 15 H15 M1 0 V8 H5" stroke="#fff" strokeWidth="1.2" fill="none" /></svg>);
const TrayVol = () => (<svg width="16" height="16" viewBox="0 0 16 16"><path d="M0 6 H3 L7 2 V14 L3 10 H0Z" fill="#eef2f6" /><path d="M9 6 Q10 8 9 10 M11.5 4.5 Q13 8 11.5 11.5" stroke="#eef2f6" fill="none" /></svg>);

const J = ({ children, last }: { children: React.ReactNode; last?: boolean }) => <Line $last={last}>{children}</Line>;

const TIGHT = "\u202f";

export default function App() {
  return (
    <Page>
      <Global />
      <Chrome>
        <BackBtn><ArrowLeft size={22} strokeWidth={3.6} /></BackBtn>
        <ForwardBtn><ArrowRight size={15} strokeWidth={2.4} /></ForwardBtn>
        <AddressBar>
          <Favicon />
          <Url>http://abc.online.<b>wolterskluwer.pl</b>/WKPLOnline/index.rpc?#procedury;nrc</Url>
          <UrlTools><Search size={14} strokeWidth={2.6} /><Caret /><RotateCw size={13} strokeWidth={2.4} /></UrlTools>
        </AddressBar>
        <TabBar>
          <BrowserTab><TabFavGlobe />Moje produkty - Serwis logow...</BrowserTab>
          <BrowserTab $active><Favicon />Samorządy zawodowe<TabClose><XIcon size={13} strokeWidth={3} /></TabClose></BrowserTab>
          <NewTab />
        </TabBar>
        <RightTools>
          <Home size={18} fill="#fff" strokeWidth={1.6} />
          <Star size={18} fill="#fff" strokeWidth={1.4} />
          <Settings size={18} strokeWidth={2.6} />
        </RightTools>
        <WindowButtons>
          <WinBtn $w={31}>–</WinBtn>
          <WinBtn $w={25}>▢</WinBtn>
          <WinBtn $w={46} $close>X</WinBtn>
        </WindowButtons>
      </Chrome>

      <Header>
        <Brand>Serwis Prawo i Zdrowie Platinum on-line</Brand>
        <HeadItem $w={97} $start>prywatna strefa</HeadItem>
        <HeadItem $w={163} $start><PersonIcon size={16} color="#222" />jtkacz@wolterskluwer.pl</HeadItem>
        <HeadItem $w={93}><LexBadge>LEX Reader</LexBadge></HeadItem>
        <HeadItem $w={33}><GearIcon size={16} color="#333" hole="#fff" /></HeadItem>
        <HeadItem $w={33}><svg width="16" height="16" viewBox="0 0 16 16"><circle cx="8" cy="8" r="7.5" fill="#222" /><text x="8" y="12.5" textAnchor="middle" fill="#fff" fontFamily="Liberation Sans" fontWeight="700" fontSize="12">?</text></svg></HeadItem>
        <HeadItem $w={93} $start><FinishLabel>ZAKOŃCZ</FinishLabel><Power size={16} color="#222" strokeWidth={2.4} /></HeadItem>
      </Header>

      <Toolbar>
        <ToolItem $w={94}><CrossLogo /><ToolLabel>BAZA WIEDZY</ToolLabel></ToolItem>
        <ToolItem $w={64}><Burst /><ToolLabel>NOWOŚCI</ToolLabel></ToolItem>
        <ToolItem $w={84}><ManIcon /><ToolLabel>MOJA STREFA</ToolLabel></ToolItem>
        <ToolItem $w={91}><IdentIcon /><ToolLabel>IDENTYFIKATOR</ToolLabel></ToolItem>
        <ToolItem $w={62}><BindersIcon /><ToolLabel>ROCZNIKI</ToolLabel></ToolItem>
        <ToolItem $w={74}><NavIcon /><ToolLabel>NAVIGATOR</ToolLabel></ToolItem>
        <SearchForm>
          <SearchInput>w produkcie<SearchChevron><ChevronDown size={17} strokeWidth={3.4} /></SearchChevron></SearchInput>
          <SearchBtn>SZUKAJ</SearchBtn>
        </SearchForm>
        <Watermark>www-online-06</Watermark>
        <DatePanel>
          <DateBtn>STAN NA DZIEŃ</DateBtn>
          <DateValue>2015.03.10</DateValue>
        </DatePanel>
      </Toolbar>
      <TealBar />

      <Main>
        <LeftPanel>
          <TabStrip>
            <PanelTab $active><DocIcon /></PanelTab>
            <PanelTab><InfoIcon /></PanelTab>
            <PanelTab><DocArrowIcon /></PanelTab>
            <PanelTab><HelpIcon /></PanelTab>
          </TabStrip>
          <CollapseBtn>
            <svg width="10" height="12" viewBox="0 0 10 12"><path d="M7 1 L2 6 L7 11" stroke="#111" strokeWidth="3" fill="none" /></svg>
          </CollapseBtn>
          <SplitHandle />
          <InfoBox>
            <InfoText>
              <strong>Praktyczne wskazówki</strong>
              Procedura: Postępowanie przed sądem lekarskim w I instancji - czynności wstępne
            </InfoText>
            <InfoBtns>
              <InfoBtn><PersonIcon /></InfoBtn>
              <InfoBtn><GearIcon /></InfoBtn>
            </InfoBtns>
          </InfoBox>
          <Body>
            <Article>
              <Meta>
                <div><b>Autorzy:</b> <a>Iwona Kaczorowska-Kossowska (red. meryt.)</a>, <a>Damian Konieczny (aut. koment.)</a></div>
                <div><b>Aktualność:</b> od 2014.01.01</div>
              </Meta>
              <Section $mt={51}>
                <Heading>Procedura: Postępowanie przed sądem lekarskim w I instancji -<br />czynności wstępne</Heading>
              </Section>
              <Section $mt={15}>
                <J>W wyniku przeprowadzenia przez rzecznika odpowiedzialności zawodowej</J>
                <J>lekarzy i lekarzy dentystów postępowania wyjaśniającego, sprawa trafia do</J>
                <J>rozpoznania okręgowego sądu lekarskiego jako sądu{TIGHT}I instancji. Zanim</J>
                <J>dojdzie do merytorycznego rozpoznania sprawy, przewodniczący sądu i sąd</J>
                <J>muszą dokonać pewnych czynności wstępnych niezbędnych do</J>
                <J>przygotowania rozprawy lub zakończenia sprawy bez jej przeprowadzania.</J>
                <J>Do postępowania przed sądem lekarskim, również w zakresie wstępnych</J>
                <J>czynności, zgodnie z <a>art. 112</a> ustawy z dnia 2 grudnia 2009 r. o izbach</J>
                <J>lekarskich (Dz. U. Nr 219, poz. 1708 z późn. zm.) - dalej u.i.l., stosuje się</J>
                <J>w{TIGHT}zakresie nieuregulowanym odpowiednio przepisy właściwe dla</J>
                <J>postępowania karnego prowadzonego w{TIGHT}trybie uproszczonym, zawarte</J>
                <J>w{TIGHT}kodeksie karnym i{TIGHT}kodeksie postępowania karnego. Procedura</J>
                <J>postępowania przed sądem lekarskim jest tożsama zarówno w odniesieniu</J>
                <J last>do lekarzy, jak i lekarzy dentystów.</J>
              </Section>
              <Section $mt={16}>
                <div>Dokumenty: <a>akty prawne</a>, <a>orzeczenia</a></div>
                <div>Procedury: <a>poprzedzające</a>, <a>następujące</a>, <a>powiązane</a></div>
              </Section>
              <Section $mt={36}>
                <Heading>Krok: otrzymanie wniosku o ukaranie</Heading>
              </Section>
              <Section $mt={17}>
                <J>Niezbędnym elementem inicjującym postępowanie przed sądem lekarskim</J>
                <J>jest <b>wniosek o{TIGHT}ukaranie</b> składany przez rzecznika odpowiedzialności</J>
                <J>zawodowej (okręgowego lub Naczelnego). <b>Przepisy ustawy o{TIGHT}izbach</b></J>
                <J><b>lekarskich nie przewidują możliwości wniesienia wniosku</b></J>
                <J><b>o{TIGHT}ukaranie przez samego pokrzywdzonego.</b> Co do zasady, właściwym</J>
                <J>do rozpoznania sprawy w{TIGHT}I instancji jest okręgowy sąd lekarski izby</J>
                <J>lekarskiej, której obwiniony jest członkiem w{TIGHT}chwili wszczęcia</J>
                <J>postępowania w{TIGHT}przedmiocie odpowiedzialności zawodowej. Natomiast,</J>
                <J>zgodnie z <a>art. 78 ust. 3</a> u.i.l., sprawy przeciwko członkom organów izb,</J>
                <J last>w tym:</J>
                <J last>– okręgowej rady lekarskiej i Naczelnej Rady Lekarskiej,</J>
                <J last>– okręgowej komisji rewizyjnej i Naczelnej Komisji Rewizyjnej,</J>
                <J last>– okręgowego sądu lekarskiego i Naczelnego Sądu Lekarskiego,</J>
                <J>– okręgowego rzecznika odpowiedzialności zawodowej i{TIGHT}Naczelnego</J>
                <J last>Rzecznika Odpowiedzialności Zawodowej oraz ich zastępców,</J>
                <J last>rozpoznaje okręgowy sąd lekarski wskazany przez Naczelny Sąd Lekarski</J>
              </Section>
              <PenBtn $top={32}><PenPlus /></PenBtn>
              <PenBtn $top={119}><PenPlus /></PenBtn>
              <PenBtn $top={472}><PenPlus /></PenBtn>
            </Article>
            <Scroll>
              <ScrollCap $mt={15}><ChevronUp size={16} strokeWidth={3} /></ScrollCap>
              <Thumb />
              <ScrollCap $mt={566}><ChevronDown size={16} strokeWidth={3} /></ScrollCap>
            </Scroll>
          </Body>
        </LeftPanel>
        <Canvas><Diagram /></Canvas>
      </Main>

      <Taskbar>
        <Orb><WinFlag /></Orb>
        <TaskBtn><Firefox /></TaskBtn>
        <TaskBtn><Lync /></TaskBtn>
        <TaskBtn><Outlook /></TaskBtn>
        <TaskBtn $active><IE /></TaskBtn>
        <TaskBtn><Folder /></TaskBtn>
        <TaskBtn><Word /></TaskBtn>
        <Tray>
          <TrayOneNote /><TrayJava /><TrayOutlook /><TrayBlue /><TraySpeaker /><TrayShield /><TrayRing /><TrayPrint /><TrayFlag /><TrayNet /><TrayVol />
          <Clock>15:54<br />2015-03-10</Clock>
          <ShowDesktop />
        </Tray>
      </Taskbar>
    </Page>
  );
}
